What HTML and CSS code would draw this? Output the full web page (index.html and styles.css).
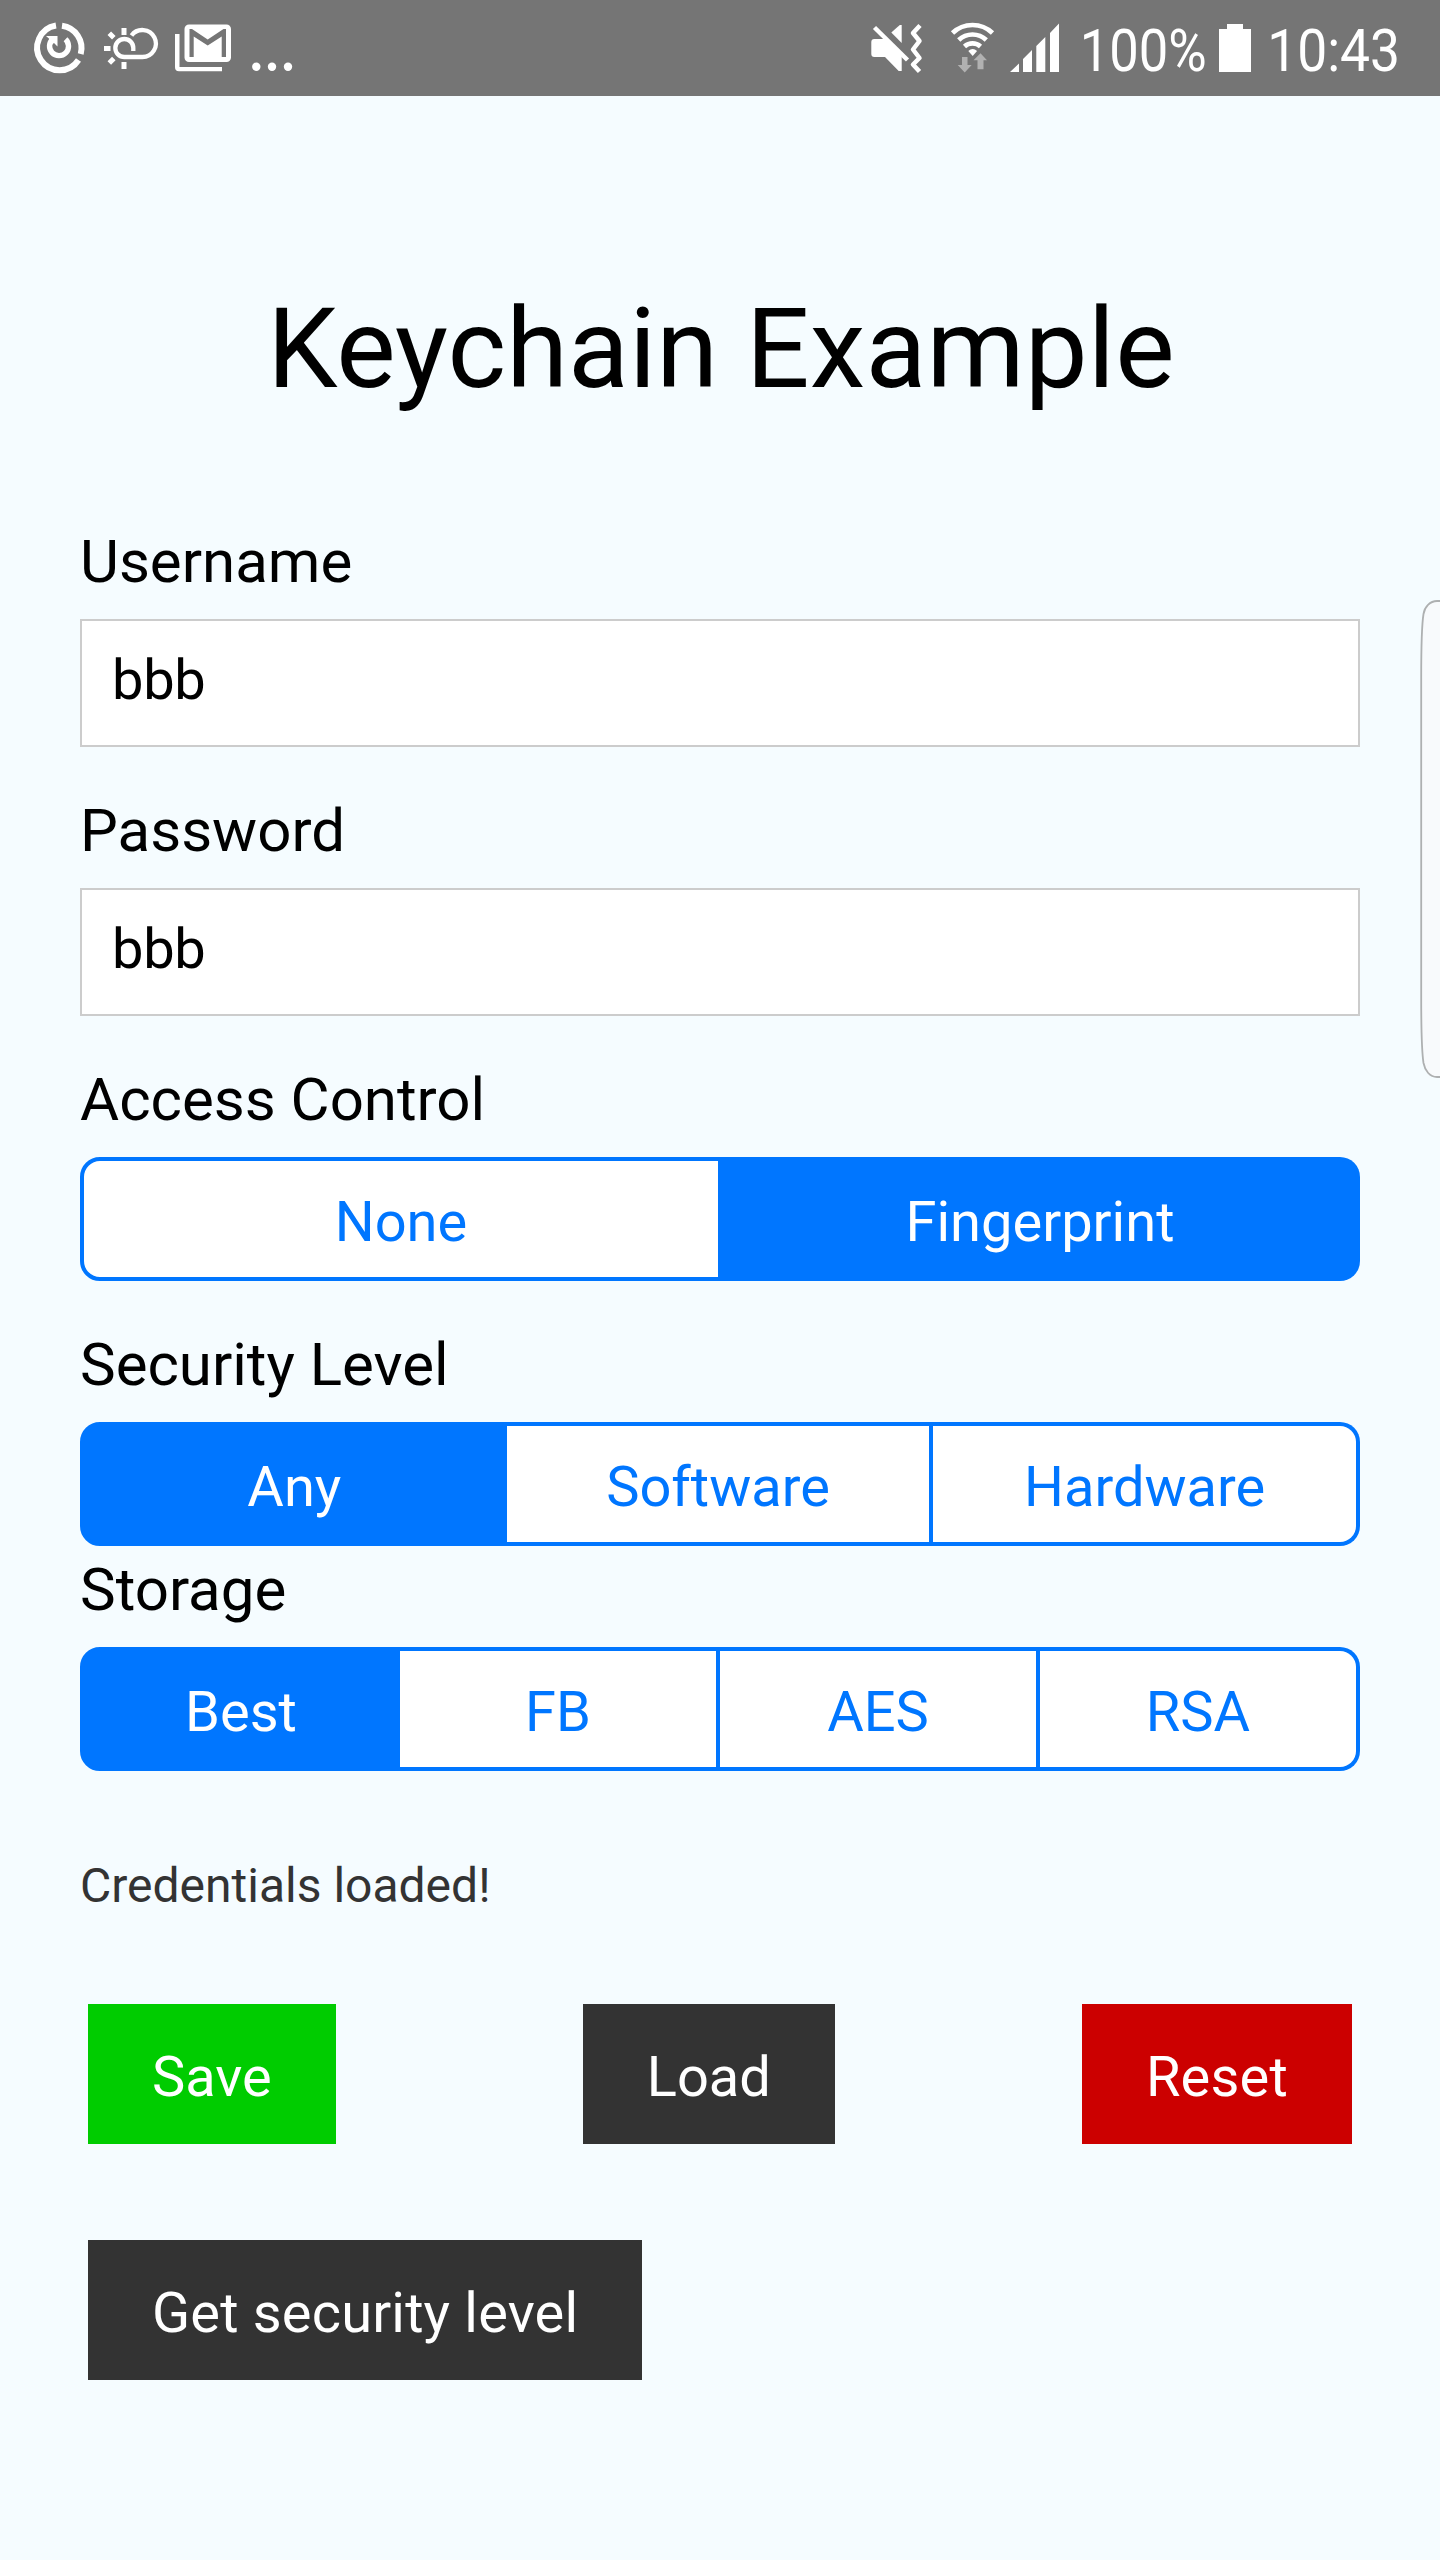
FILE: index.html
```html
<!DOCTYPE html>
<html lang="en">
<head>
<meta charset="utf-8">
<title>Keychain Example</title>
<link rel="stylesheet" href="styles.css">
</head>
<body>
<header class="status">
  <svg class="status-icons" width="300" height="96" viewBox="0 0 300 96">
    <g fill="none" stroke="#fff">
      <path stroke-width="6" d="M62 25.800A22.500 22.500 0 0 1 80.700 54M78.500 60A22.500 22.500 0 1 1 56 25.500"/>
      <path stroke-width="5.400" d="M65.500 39.200A9.500 9.500 0 1 1 52.800 39"/>
      <path stroke-width="4.300" d="M131.500 35.500A13.500 13.500 0 1 1 142.300 57H124.300A9 9 0 1 1 133.300 48V51"/>
      <path stroke-width="5" d="M124 28v7M124 62v7M104 48.500h6.500M109.300 33.300l4.500 4.500M109.300 63l4.500-4.500"/>
    </g>
    <g fill="#fff">
      <path d="M46 36h11.500v10.500l-3.500-3.500-2 1.500-2-5z"/>
      <path d="M175 34h4.500v33H222v4.300H179a4 4 0 0 1-4-4z"/>
      <path fill-rule="evenodd" d="M189 24.500h37.500a4.500 4.500 0 0 1 4.500 4.500v28.500a4.500 4.500 0 0 1-4.500 4.500H189a4.500 4.500 0 0 1-4.500-4.500V29a4.500 4.500 0 0 1 4.500-4.500zM189.500 29v28h4.200V36.500l14 9 14-9V57h4.300V29h-2.500l-15.800 10.500L192 29z"/>
      <circle cx="256.300" cy="66.800" r="4.200"/><circle cx="272" cy="66.800" r="4.200"/><circle cx="288" cy="66.800" r="4.200"/>
    </g>
  </svg>
  <div class="status-right">
    <svg width="210" height="96" viewBox="860 0 210 96">
      <g fill="#fff">
        <path d="M871.300 42a3 3 0 0 1 3-3H886l15.700 15V71h-3L885 57h-10.700a3 3 0 0 1-3-3z"/>
        <path d="M891.300 32.500l8.500-7.500h1.900v18z"/>
        <path d="M1010 72l9-8.500V72zM1023 72V59l9-9v22zM1036.300 72V46l9-9v35zM1050 72V33l9-9.500V72z"/>
        <path d="M972.700 56L968.300 51q4.400-4 8.800 0z"/>
      </g>
      <g fill="none" stroke="#fff">
        <path stroke-width="4.500" d="M874.500 27.500L907.500 60"/>
        <path stroke-width="4.500" stroke-linejoin="round" d="M920 25.500L913 33l6.500 8-6.500 8.500 6.500 8.500-6.500 6.500 6.500 7"/>
        <path stroke-width="4.700" d="M952.500 33a29 29 0 0 1 40 0M958.700 40a20 20 0 0 1 27.600 0M964.500 46.500a12 12 0 0 1 16 0"/>
      </g>
      <path fill="#b1b1b1" d="M962 57h5.500v8h4.200l-7 7.500-7-7.500h4.300zM977.500 69.300v-9h-4l7-7 6.500 7h-3.500v9z"/>
    </svg>
    <span class="narrow battery-level">100%</span>
    <svg width="34" height="96" viewBox="1218 0 34 96"><path fill="#fff" d="M1219 29h8v-5h16v5h8v43h-32z"/></svg>
    <span class="narrow clock">10:43</span>
  </div>
</header>
<main class="screen">
  <h1 class="title">Keychain Example</h1>
  <section class="field">
    <label class="label" for="username">Username</label>
    <input class="input" id="username" type="text" value="bbb">
  </section>
  <section class="field">
    <label class="label" for="password">Password</label>
    <input class="input" id="password" type="text" value="bbb">
  </section>
  <section class="field">
    <div class="label">Access Control</div>
    <div class="segments segments-pair"><div class="segment">None</div><div class="segment selected">Fingerprint</div></div>
  </section>
  <section class="field field-tight">
    <div class="label">Security Level</div>
    <div class="segments"><div class="segment selected">Any</div><div class="segment">Software</div><div class="segment">Hardware</div></div>
  </section>
  <section class="field">
    <div class="label">Storage</div>
    <div class="segments"><div class="segment selected">Best</div><div class="segment">FB</div><div class="segment">AES</div><div class="segment">RSA</div></div>
  </section>
  <p class="message">Credentials loaded!</p>
  <div class="buttons">
    <button class="button save">Save</button>
    <button class="button">Load</button>
    <button class="button reset">Reset</button>
  </div>
  <div class="buttons">
    <button class="button wide">Get security level</button>
  </div>
</main>
<svg class="edge-handle" width="22" height="484" viewBox="0 0 22 484"><path d="M25 3H19C12 3 6.500 9 5.500 16Q3.200 30 3.200 80V400Q3.200 450 5.500 465C7 473 12 479 19 479H25" fill="#f8fafc" stroke="#aeb0b1" stroke-width="1.800"/></svg>
</body>
</html>
```

FILE: styles.css
```css
* { box-sizing: border-box; }
body {
  margin: 0;
  width: 1440px;
  height: 2560px;
  position: relative;
  overflow: hidden;
  background: #f5fcff;
  color: #000;
  font-family: Roboto, "Liberation Sans", sans-serif;
}
svg { display: block; flex: none; }
.status {
  height: 96px;
  display: flex;
  justify-content: space-between;
  background: #757575;
  color: #fff;
}
.status-right { display: flex; padding-right: 40px; }
.narrow {
  font-size: 60px;
  line-height: 101px;
  transform: scaleX(.89);
  transform-origin: left;
  white-space: nowrap;
}
.battery-level { width: 148px; padding-left: 11px; transform: scaleX(.875); }
.clock { width: 148px; padding-left: 17px; }
.screen { padding: 193px 80px 0; }
.title {
  margin: 0 0 120px;
  padding-left: 2px;
  font-size: 112px;
  font-weight: 400;
  line-height: 120px;
  letter-spacing: .1px;
  text-align: center;
}
.field { margin-bottom: 51px; }
.field-tight { margin-bottom: 11px; }
.label {
  display: block;
  height: 90px;
  font-size: 60px;
  line-height: 60px;
  padding-top: 3px;
}
.input {
  display: block;
  width: 100%;
  height: 128px;
  padding: 0 30px 6px;
  border: 2px solid #ccc;
  border-radius: 0;
  background: #fff;
  color: #000;
  font: 400 56px/1.17 Roboto, "Liberation Sans", sans-serif;
  letter-spacing: -.3px;
}
.segments {
  height: 124px;
  display: grid;
  grid-auto-flow: column;
  grid-auto-columns: minmax(0, 1fr);
}
.segments-pair { grid-template-columns: 642px 1fr; }
.segment {
  height: 124px;
  border: 4px solid #0076ff;
  border-left-width: 0;
  background: #fff;
  color: #0076ff;
  font-size: 56px;
  line-height: 122px;
  text-align: center;
}
.segment:first-child { border-left-width: 4px; border-radius: 20px 0 0 20px; }
.segment:last-child { border-radius: 0 20px 20px 0; }
.segment.selected { padding-left: 2px; background: #0076ff; color: #fff; }
.message {
  margin: 87px 0 90px;
  color: #333;
  font-size: 48px;
  line-height: 56px;
}
.buttons {
  display: flex;
  justify-content: space-between;
  padding: 0 8px;
  margin-bottom: 96px;
}
.button {
  height: 140px;
  padding: 8px 64px 0;
  border: 0;
  background: #333;
  color: #fff;
  font: 400 56px/1.17 Roboto, "Liberation Sans", sans-serif;
}
.wide { letter-spacing: .17px; }
.save { background: #00cc00; }
.reset { background: #cc0000; letter-spacing: .2px; }
.edge-handle { position: absolute; right: 0; top: 598px; }
```
